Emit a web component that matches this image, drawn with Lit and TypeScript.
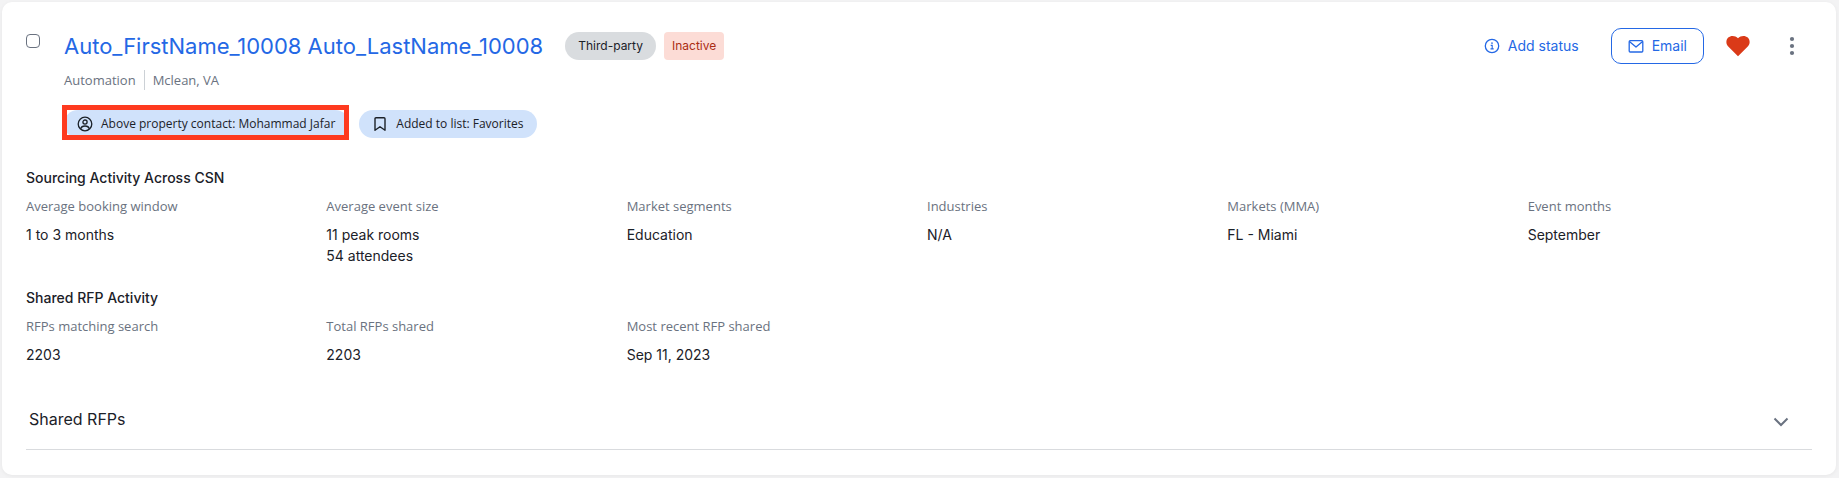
import { LitElement, html, css } from "lit";
import { customElement, property, state } from "lit/decorators.js";

interface Fact {
  label: string;
  values: string[];
}

@customElement("fact-section")
class FactSection extends LitElement {
  @property() heading = "";
  @property({ attribute: false }) facts: Fact[] = [];

  static styles = css`
    :host {
      display: block;
    }
    .heading {
      margin: 0 0 8px;
      font-size: 14px;
      line-height: 20px;
      font-weight: 500;
      color: #1b2128;
    }
    .grid {
      display: grid;
      grid-template-columns: repeat(6, minmax(0, 1fr));
      column-gap: 16px;
      margin: 0;
    }
    .label {
      margin-bottom: 8px;
      font-family: "Open Sans", sans-serif;
      font-size: 13px;
      line-height: 20px;
      color: #6a7280;
    }
    .value {
      margin: 0;
      font-size: 14px;
      line-height: 21px;
      color: #1b2128;
    }
  `;

  render() {
    return html`
      <h3 class="heading">${this.heading}</h3>
      <dl class="grid">
        ${this.facts.map(
          (fact) => html`
            <div>
              <dt class="label">${fact.label}</dt>
              ${fact.values.map((value) => html`<dd class="value">${value}</dd>`)}
            </div>
          `
        )}
      </dl>
    `;
  }
}

@customElement("app-root")
class AppRoot extends LitElement {
  @state() private open = false;

  private sourcing: Fact[] = [
    { label: "Average booking window", values: ["1 to 3 months"] },
    { label: "Average event size", values: ["11 peak rooms", "54 attendees"] },
    { label: "Market segments", values: ["Education"] },
    { label: "Industries", values: ["N/A"] },
    { label: "Markets (MMA)", values: ["FL - Miami"] },
    { label: "Event months", values: ["September"] },
  ];

  private shared: Fact[] = [
    { label: "RFPs matching search", values: ["2203"] },
    { label: "Total RFPs shared", values: ["2203"] },
    { label: "Most recent RFP shared", values: ["Sep 11, 2023"] },
  ];

  static styles = css`
    :host {
      display: block;
      box-sizing: border-box;
      min-height: 100vh;
      padding: 2px 3px 3px 2px;
      background: #f3f3f4;
      font-family: Inter, sans-serif;
      color: #1b2128;
    }
    .card {
      padding: 26px 24px 25px;
      border-radius: 10px;
      background: #fff;
      box-shadow: 0 1px 4px rgba(0, 0, 0, 0.05);
    }
    button {
      margin: 0;
      padding: 0;
      border: 0;
      background: none;
      font: inherit;
      color: inherit;
      cursor: pointer;
    }
    svg {
      display: block;
      flex: none;
    }
    .top {
      display: flex;
      align-items: flex-start;
      gap: 24px;
    }
    .check {
      appearance: none;
      flex: none;
      box-sizing: border-box;
      width: 14px;
      height: 14px;
      margin: 6px 0 0;
      border: 1px solid #6a7280;
      border-radius: 4px;
      background: #fff;
    }
    .check:checked {
      background: #2468e5;
    }
    .person {
      flex: 1;
      min-width: 0;
    }
    .row {
      display: flex;
      align-items: center;
      min-height: 36px;
    }
    .name {
      margin: 0 22px 0 0;
      font-size: 22px;
      line-height: 36px;
      font-weight: 400;
    }
    .name a {
      color: #2468e5;
      text-decoration: none;
    }
    .badge {
      padding: 0 13px;
      border-radius: 14px;
      background: #d9dcdf;
      font-size: 12px;
      line-height: 28px;
    }
    .inactive {
      margin-left: 8px;
      padding: 0 8px;
      border-radius: 4px;
      background: #fcdcd6;
      color: #ab2d14;
    }
    .actions {
      display: flex;
      align-items: center;
      margin-left: auto;
      font-size: 14px;
      line-height: 20px;
      color: #2468e5;
    }
    .status,
    .email {
      display: flex;
      align-items: center;
      gap: 8px;
    }
    .email {
      box-sizing: border-box;
      height: 36px;
      margin-left: 32px;
      padding: 0 16px;
      border: 1px solid #2468e5;
      border-radius: 10px;
    }
    .heart {
      margin-left: 22px;
    }
    .more {
      margin: 0 10px 0 32px;
    }
    .meta {
      display: flex;
      margin-top: 6px;
      font: 400 13px/20px "Open Sans", sans-serif;
      color: #6a7280;
    }
    .place {
      margin-left: 8px;
      padding-left: 8px;
      border-left: 1px solid #ccd1d6;
    }
    .tags {
      display: flex;
      gap: 10px;
      margin-top: 20px;
      font: 400 12px/28px "Open Sans", sans-serif;
    }
    .tag {
      position: relative;
      display: flex;
      align-items: center;
      gap: 8px;
      padding: 0 14px 0 13px;
      border-radius: 14px;
      background: #d0e2fb;
    }
    .marked::after {
      content: "";
      position: absolute;
      inset: -5px 0 -2px -2px;
      border: 5px solid #fe3a1f;
    }
    .sections {
      display: grid;
      gap: 22px;
      margin-top: 30px;
    }
    .expander {
      display: flex;
      align-items: center;
      justify-content: space-between;
      box-sizing: border-box;
      width: 100%;
      height: 62px;
      margin-top: 23px;
      padding: 0 23px 0 3px;
      border-bottom: 1px solid #d9dbde;
      font-size: 16px;
      line-height: 24px;
    }
  `;

  render() {
    return html`
      <article class="card">
        <div class="top">
          <input class="check" type="checkbox" aria-label="Select contact" />
          <div class="person">
            <div class="row">
              <h2 class="name"><a href="#">Auto_FirstName_10008 Auto_LastName_10008</a></h2>
              <span class="badge">Third-party</span>
              <span class="badge inactive">Inactive</span>
              <div class="actions">
                <button class="status">
                  <svg width="16" height="16" viewBox="0 0 16 16" fill="none" stroke="currentColor" stroke-width="1.3">
                    <circle cx="8" cy="8" r="6.7" />
                    <path d="M6.7 7.4h1.5v3.4M6.5 10.9h3.2" stroke-width="1.1" />
                    <circle cx="8" cy="5.1" r=".85" fill="currentColor" stroke="none" />
                  </svg>
                  Add status
                </button>
                <button class="email">
                  <svg width="16" height="16" viewBox="0 0 16 16" fill="none" stroke="currentColor" stroke-width="1.3" stroke-linejoin="round">
                    <rect x="1.2" y="2.7" width="13.6" height="11.3" rx="1" />
                    <path d="M1.4 3.4 8 9l6.6-5.6" />
                  </svg>
                  Email
                </button>
                <button class="heart" aria-label="Favorite">
                  <svg width="24" height="24" viewBox="0 0 24 24" fill="#da3a18">
                    <path d="M12 22.2 2 12.3C-.3 9.8-.1 5.8 2.2 3.6 4.8 1.3 9.2 1.4 12 4.3 14.8 1.4 19.2 1.3 21.8 3.6 24.1 5.8 24.3 9.8 22 12.3Z" />
                  </svg>
                </button>
                <button class="more" aria-label="More actions">
                  <svg width="20" height="20" viewBox="0 0 20 20" fill="#6a7280">
                    <circle cx="10" cy="3" r="2.1" />
                    <circle cx="10" cy="10" r="2.1" />
                    <circle cx="10" cy="17" r="2.1" />
                  </svg>
                </button>
              </div>
            </div>
            <div class="meta">
              <span>Automation</span>
              <span class="place">Mclean, VA</span>
            </div>
            <div class="tags">
              <span class="tag marked">
                <svg width="16" height="16" viewBox="0 0 16 16" fill="none" stroke="currentColor" stroke-width="1.3">
                  <circle cx="8" cy="8" r="6.8" />
                  <circle cx="8" cy="6.1" r="2.1" />
                  <path d="M3.6 13c.5-2 2-3 4.4-3s3.9 1 4.4 3" />
                </svg>
                Above property contact: Mohammad Jafar
              </span>
              <span class="tag">
                <svg width="16" height="16" viewBox="0 0 16 16" fill="none" stroke="currentColor" stroke-width="1.4" stroke-linejoin="round">
                  <path d="M3 14.3V2.7q0-1 1-1h8q1 0 1 1v11.6l-5-3.6Z" />
                </svg>
                Added to list: Favorites
              </span>
            </div>
          </div>
        </div>
        <div class="sections">
          <fact-section heading="Sourcing Activity Across CSN" .facts=${this.sourcing}></fact-section>
          <fact-section heading="Shared RFP Activity" .facts=${this.shared}></fact-section>
        </div>
        <button class="expander" aria-expanded=${this.open ? "true" : "false"} @click=${() => (this.open = !this.open)}>
          Shared RFPs
          <svg width="16" height="16" viewBox="0 0 16 16" fill="none" stroke="#6a7280" stroke-width="2">
            <path d="m1.5 7.5 6.500 6.500 6.500-6.500" />
          </svg>
        </button>
      </article>
    `;
  }
}
